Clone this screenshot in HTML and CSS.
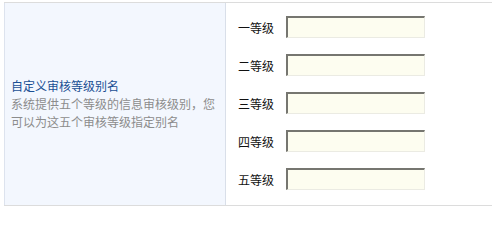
FILE: index.html
```html
<!DOCTYPE html>
<html>
<head>
<meta charset="utf-8">
<link rel="stylesheet" href="styles.css">
</head>
<body>
<div class="form-row">
  <div class="label-col">
    <div class="title">自定义审核等级别名</div>
    <div class="desc">系统提供五个等级的信息审核级别，您可以为这五个审核等级指定别名</div>
  </div>
  <div class="field-col">
    <div class="level"><span class="level-name">一等级</span><input class="level-input" type="text"></div>
    <div class="level"><span class="level-name">二等级</span><input class="level-input" type="text"></div>
    <div class="level"><span class="level-name">三等级</span><input class="level-input" type="text"></div>
    <div class="level"><span class="level-name">四等级</span><input class="level-input" type="text"></div>
    <div class="level"><span class="level-name">五等级</span><input class="level-input" type="text"></div>
  </div>
</div>
</body>
</html>
```
FILE: styles.css
```css
html, body {
  margin: 0;
  padding: 0;
  background: #ffffff;
}
body {
  font-family: "Noto Sans CJK SC", "DejaVu Sans", sans-serif;
  font-size: 12px;
}
.form-row {
  display: flex;
  margin: 2px 0 0 4px;
  border-top: 1px solid #dcdcdc;
  border-bottom: 1px solid #dcdcdc;
  height: 202px;
}
.label-col {
  width: 208px;
  padding: 0 6px;
  background: #f3f7fe;
  border-left: 1px solid #dde3ee;
  border-right: 1px solid #d9dfe9;
  display: flex;
  flex-direction: column;
  justify-content: center;
  line-height: 18px;
}
.title {
  color: #1a4f94;
}
.desc {
  color: #8c8c8c;
}
.field-col {
  flex: 1;
  padding: 5px 0 0 12px;
}
.level {
  height: 38px;
  display: flex;
  align-items: center;
}
.level-name {
  width: 48px;
  color: #111;
}
.level-input {
  box-sizing: border-box;
  width: 139px;
  height: 22px;
  margin: 0;
  padding: 0;
  background: #fdfdf0;
  border-top: 2px solid #767670;
  border-left: 2px solid #767670;
  border-right: 1px solid #ebebe3;
  border-bottom: 1px solid #ebebe3;
  outline: none;
}
```
